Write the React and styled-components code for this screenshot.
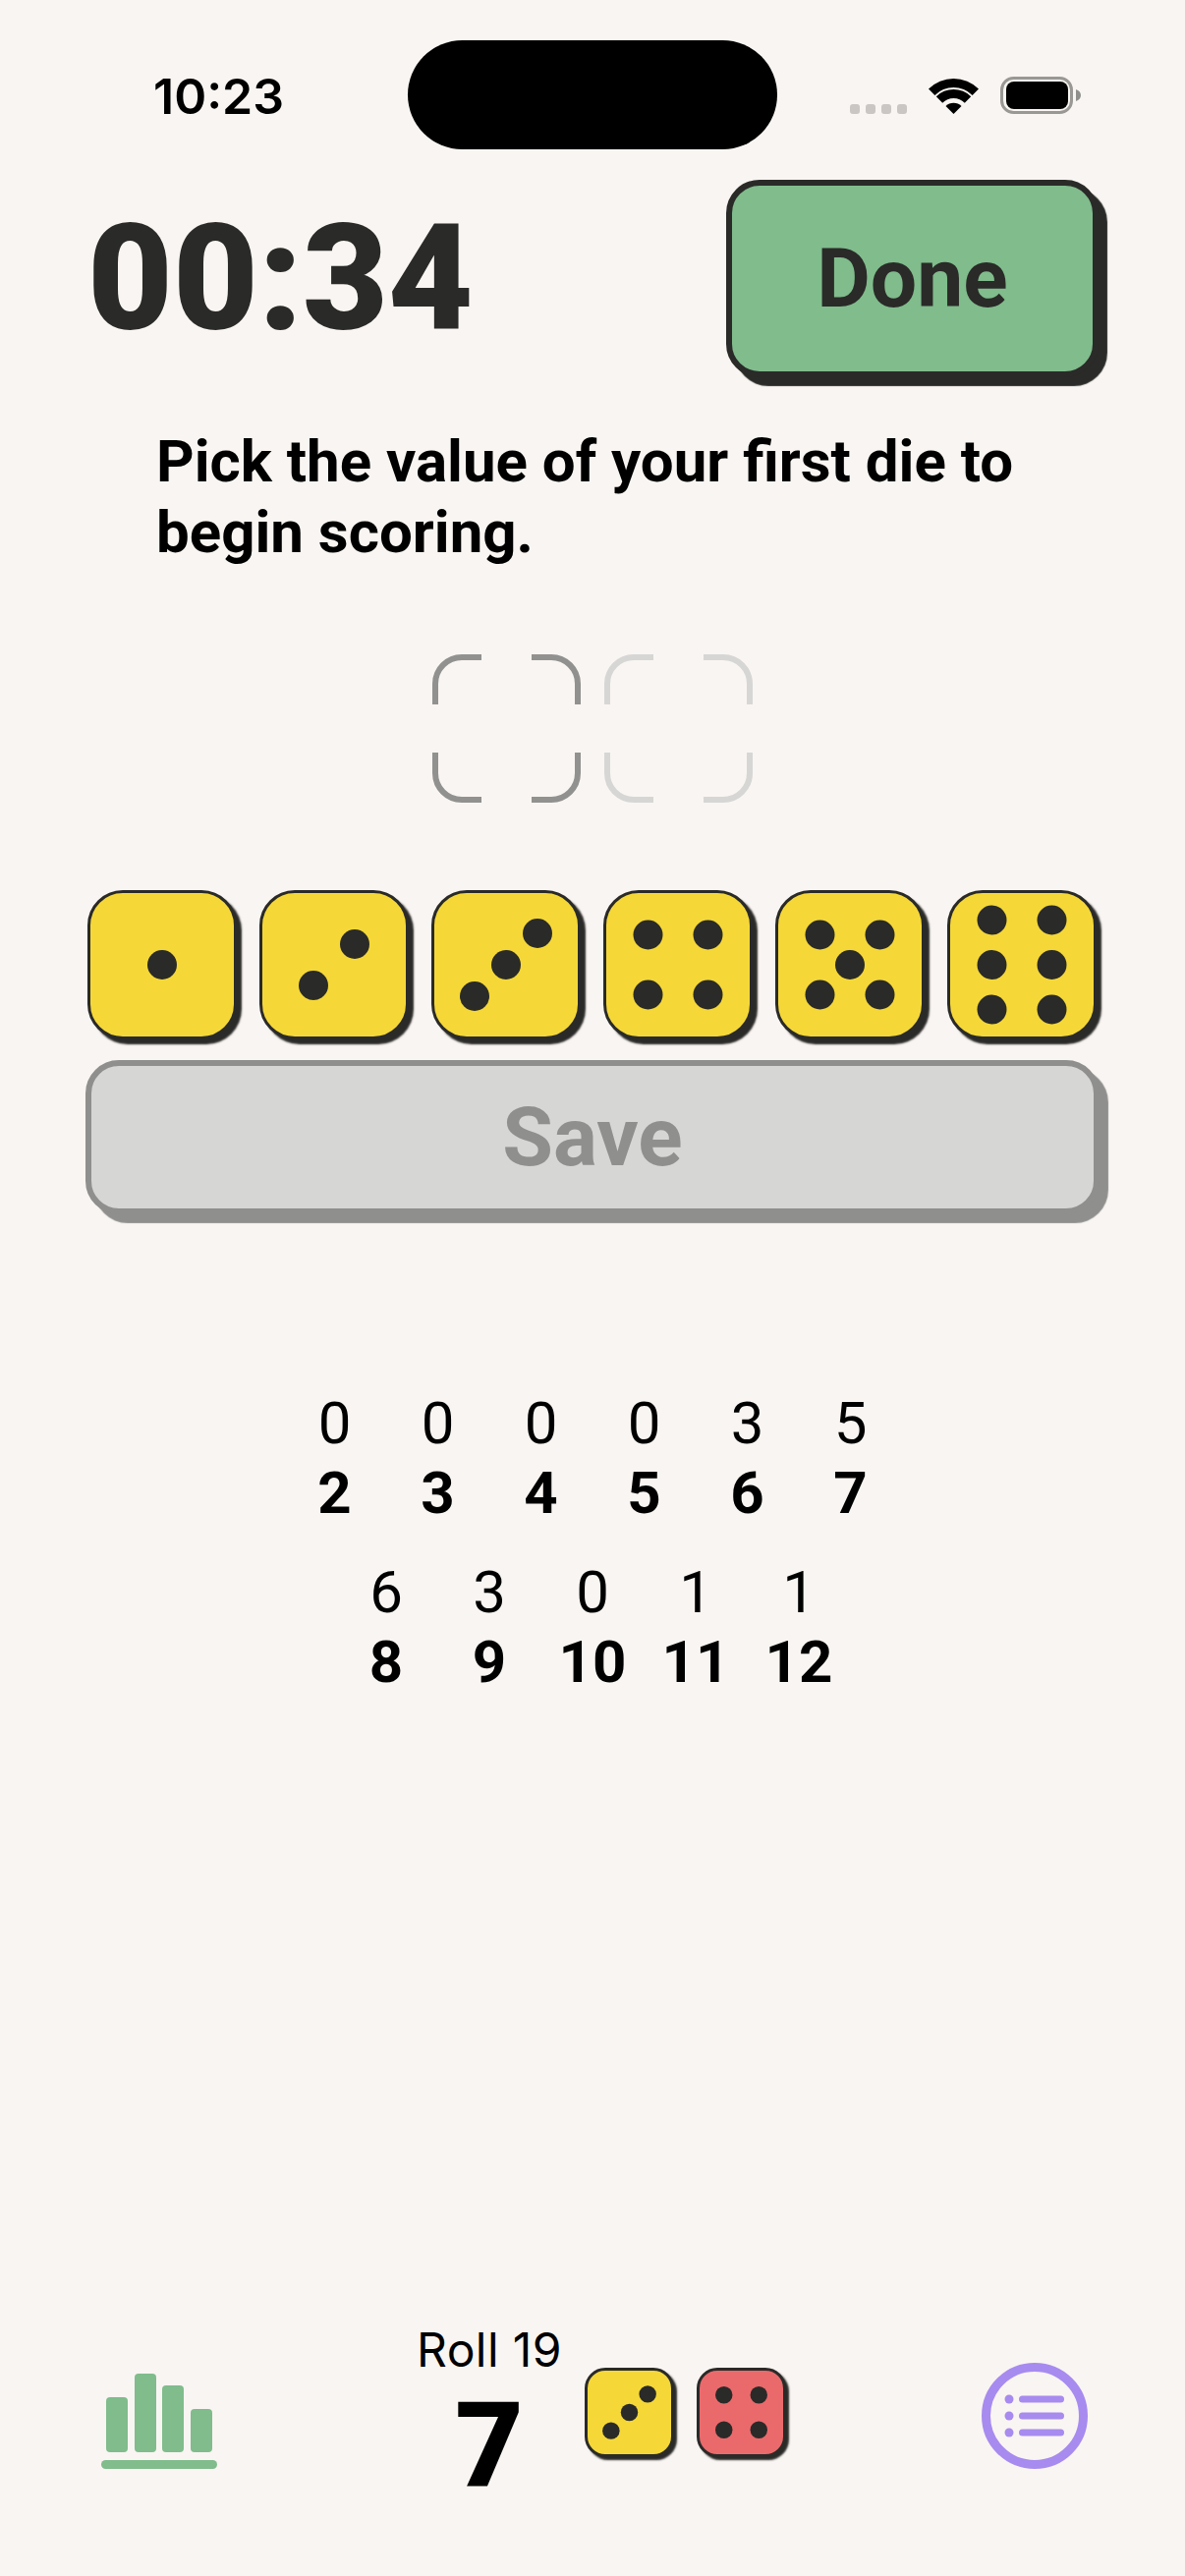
import React from 'react';
import styled, { createGlobalStyle } from 'styled-components';

const ink = '#2a2a28';
const green = '#80bc8c';
const purple = '#a78bef';

const GlobalStyle = createGlobalStyle`
    html, body {
        margin: 0;
        padding: 0;
        background: #f9f5f2;
    }
    * {
        box-sizing: border-box;
    }
`;

const Screen = styled.div`
    width: 1206px;
    height: 2622px;
    display: flex;
    flex-direction: column;
    overflow: hidden;
    background: #f9f5f2;
    font-family: Roboto, "Liberation Sans", sans-serif;
    color: #000;
`;

const StatusBar = styled.div`
    display: flex;
    height: 111px;
    margin-top: 41px;
    padding-left: 156px;
    flex: none;
`;
const Clock = styled.div`
    width: 132px;
    margin-top: 31px;
    font-family: Inter, sans-serif;
    font-size: 50px;
    line-height: 52px;
    font-weight: 600;
    white-space: nowrap;
`;
const Island = styled.div`
    width: 376px;
    height: 111px;
    margin-left: 127px;
    border-radius: 56px;
    background: #000;
`;
const StatusIcons = styled.div`
    display: flex;
    align-items: flex-end;
    height: 75px;
    margin-left: 74px;
`;
const SignalDots = styled.div`
    display: flex;
    gap: 6px;
    margin-right: 22px;
`;
const SignalDot = styled.span`
    width: 10px;
    height: 10px;
    border-radius: 3px;
    background: #c9c6c3;
`;
const WifiIcon = styled.svg`
    display: block;
    margin-right: 22px;
`;
const BatteryIcon = styled.svg`
    display: block;
`;

const Header = styled.div`
    display: flex;
    justify-content: space-between;
    align-items: center;
    margin-top: 31px;
    padding: 0 88px 0 89px;
    flex: none;
`;
const Timer = styled.div`
    font-size: 150px;
    line-height: 170px;
    font-weight: 900;
    color: ${ink};
`;
const ChunkyButton = styled.div`
    display: flex;
    align-items: center;
    justify-content: center;
    flex: none;
    border: 6px solid ${(props) => props.$edge};
    border-radius: 34px;
    box-shadow: 9px 9px 1px ${(props) => props.$edge};
    background: ${(props) => props.$fill};
    color: ${(props) => props.$edge};
    font-size: 84px;
    font-weight: 700;
`;
const DoneButton = styled(ChunkyButton)`
    width: 379px;
    height: 201px;
`;
const SaveButton = styled(ChunkyButton)`
    width: 1032px;
    height: 157px;
    margin: 21px 0 0 87px;
`;

const Prompt = styled.p`
    margin: 50px 0 0;
    padding-left: 159px;
    font-size: 60px;
    line-height: 72px;
    font-weight: 700;
    flex: none;
`;

const Slots = styled.div`
    display: flex;
    justify-content: center;
    gap: 24px;
    margin-top: 88px;
    flex: none;
`;
const SlotFrame = styled.svg`
    display: block;
    fill: none;
    stroke: ${(props) => props.$color};
    stroke-width: 6;
`;

const DiceRow = styled.div`
    display: flex;
    gap: 23px;
    margin-top: 89px;
    padding-left: 89px;
    flex: none;
`;
const DieFace = styled.div`
    width: ${(props) => props.$size}px;
    height: ${(props) => props.$size}px;
    flex: none;
    border: 3px solid ${ink};
    border-radius: ${(props) => Math.round(props.$size * 0.235)}px;
    box-shadow: ${(props) => props.$shadow}px ${(props) => props.$shadow}px 2px ${ink};
    background: ${(props) => props.$fill};
`;
const PipLayer = styled.svg`
    display: block;
    width: 100%;
    height: 100%;
    fill: ${ink};
`;

const Counts = styled.div`
    display: flex;
    flex-direction: column;
    gap: 30px;
    margin-top: 177px;
    flex: none;
`;
const CountRow = styled.div`
    display: flex;
    justify-content: center;
    gap: 35px;
`;
const CountCell = styled.div`
    width: 70px;
    text-align: center;
    font-size: 60px;
    line-height: 71px;
`;
const Tally = styled.div`
    font-weight: 400;
`;
const Total = styled.div`
    font-weight: 700;
`;

const BottomBar = styled.div`
    display: flex;
    align-items: flex-start;
    height: 257px;
    margin-top: auto;
    padding-left: 103px;
    flex: none;
`;
const StatsIcon = styled.svg`
    display: block;
    margin-top: 51px;
    fill: ${green};
`;
const RollBlock = styled.div`
    width: 180px;
    margin-left: 187px;
    text-align: center;
`;
const RollLabel = styled.div`
    font-family: Inter, sans-serif;
    font-size: 48px;
    line-height: 52px;
    font-weight: 400;
    letter-spacing: 0.4px;
    margin-top: 1px;
`;
const RollTotal = styled.div`
    margin-top: 12px;
    font-size: 120px;
    line-height: 120px;
    font-weight: 900;
`;
const DicePair = styled.div`
    display: flex;
    gap: 23px;
    margin: 45px 0 0 7px;
`;
const ListIcon = styled.svg`
    display: block;
    margin: 40px 0 0 199px;
    fill: ${purple};
`;

// pip centres relative to the middle of a 146 unit die face
const pipLayouts = {
    1: [[0, 0]],
    2: [[-21, 21], [21, -21]],
    3: [[-32, 32], [0, 0], [32, -32]],
    4: [[-30.5, -30.5], [30.5, -30.5], [-30.5, 30.5], [30.5, 30.5]],
    5: [[-30.5, -30.5], [30.5, -30.5], [0, 0], [-30.5, 30.5], [30.5, 30.5]],
    6: [[-30.5, -45.5], [30.5, -45.5], [-30.5, 0], [30.5, 0], [-30.5, 45.5], [30.5, 45.5]],
};

const Die = ({ value, size = 152, shadow = 5, fill = '#f5d838' }) => (
    <DieFace $size={size} $shadow={shadow} $fill={fill}>
        <PipLayer viewBox="-73 -73 146 146">
            {pipLayouts[value].map(([x, y]) => (
                <circle key={`${x},${y}`} cx={x} cy={y} r="15" />
            ))}
        </PipLayer>
    </DieFace>
);

const Slot = ({ color }) => (
    <SlotFrame $color={color} width="151" height="151" viewBox="0 0 151 151">
        <path d="M50 3H30A27 27 0 0 0 3 30V51" />
        <path d="M101 3H121A27 27 0 0 1 148 30V51" />
        <path d="M3 100V121A27 27 0 0 0 30 148H50" />
        <path d="M148 100V121A27 27 0 0 1 121 148H101" />
    </SlotFrame>
);

const firstRow = [[0, 2], [0, 3], [0, 4], [0, 5], [3, 6], [5, 7]];
const secondRow = [[6, 8], [3, 9], [0, 10], [1, 11], [1, 12]];

const CountLine = ({ cells }) => (
    <CountRow>
        {cells.map(([tally, total]) => (
            <CountCell key={total}>
                <Tally>{tally}</Tally>
                <Total>{total}</Total>
            </CountCell>
        ))}
    </CountRow>
);

const App = () => {
    return (
        <Screen>
            <GlobalStyle />
            <StatusBar>
                <Clock>10:23</Clock>
                <Island />
                <StatusIcons>
                    <SignalDots>
                        <SignalDot />
                        <SignalDot />
                        <SignalDot />
                        <SignalDot />
                    </SignalDots>
                    <WifiIcon width="51" height="37" viewBox="0 0 51 37">
                        <path d="M0 11.5A36 36 0 0 1 51 11.5L44.6 17.9A27 27 0 0 0 6.4 17.9Z" />
                        <path d="M7.8 19.3A25 25 0 0 1 43.2 19.3L36.8 25.7A16 16 0 0 0 14.2 25.7Z" />
                        <path d="M17.5 29A11.3 11.3 0 0 1 33.5 29L25.5 37Z" />
                    </WifiIcon>
                    <BatteryIcon width="82" height="38" viewBox="0 0 82 38">
                        <rect x="1.5" y="1.5" width="71" height="35" rx="12" fill="none" stroke="#999895" strokeWidth="3" />
                        <rect x="6" y="5" width="63" height="28" rx="8" />
                        <path d="M77 13C80 14 82 16 82 19C82 22 80 24 77 25Z" fill="#8f8f8c" />
                    </BatteryIcon>
                </StatusIcons>
            </StatusBar>

            <Header>
                <Timer>00:34</Timer>
                <DoneButton $edge={ink} $fill={green}>Done</DoneButton>
            </Header>

            <Prompt>
                Pick the value of your first die to
                <br />
                begin scoring.
            </Prompt>

            <Slots>
                <Slot color="#919190" />
                <Slot color="#d6d6d5" />
            </Slots>

            <DiceRow>
                {[1, 2, 3, 4, 5, 6].map((value) => (
                    <Die key={value} value={value} />
                ))}
            </DiceRow>

            <SaveButton $edge="#8f8f8e" $fill="#d6d6d5">Save</SaveButton>

            <Counts>
                <CountLine cells={firstRow} />
                <CountLine cells={secondRow} />
            </Counts>

            <BottomBar>
                <StatsIcon width="118" height="97" viewBox="0 0 118 97">
                    <rect x="5" y="24" width="22" height="56" rx="4" />
                    <rect x="34" y="0" width="22" height="80" rx="4" />
                    <rect x="62" y="12" width="22" height="68" rx="4" />
                    <rect x="91" y="36" width="22" height="44" rx="4" />
                    <rect x="0" y="88" width="118" height="9" rx="4.5" />
                </StatsIcon>
                <RollBlock>
                    <RollLabel>Roll 19</RollLabel>
                    <RollTotal>7</RollTotal>
                </RollBlock>
                <DicePair>
                    <Die value={3} size={91} shadow={3} />
                    <Die value={4} size={91} shadow={3} fill="#ea6a6c" />
                </DicePair>
                <ListIcon width="108" height="108" viewBox="0 0 108 108">
                    <circle cx="54" cy="54" r="49.5" fill="none" stroke={purple} strokeWidth="9" />
                    <circle cx="28" cy="37" r="4.5" />
                    <circle cx="28" cy="54" r="4.5" />
                    <circle cx="28" cy="71" r="4.5" />
                    <rect x="38" y="33.5" width="46" height="7" rx="3.5" />
                    <rect x="38" y="50.5" width="46" height="7" rx="3.5" />
                    <rect x="38" y="67.5" width="46" height="7" rx="3.5" />
                </ListIcon>
            </BottomBar>
        </Screen>
    );
};

export default App;
